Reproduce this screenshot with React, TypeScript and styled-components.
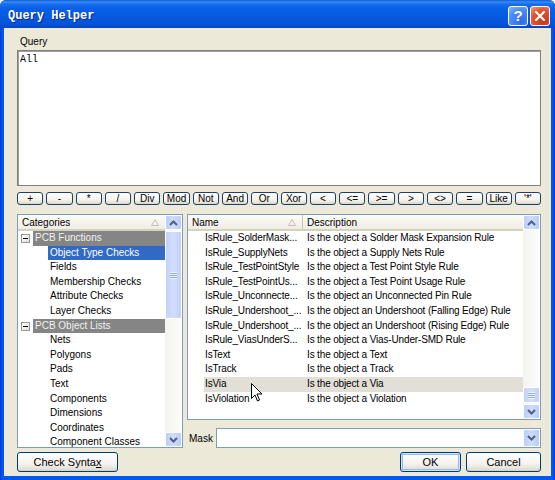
import React from 'react';
import styled, {createGlobalStyle, css} from 'styled-components';

const Global = createGlobalStyle`
  html, body {
    margin: 0;
    padding: 0;
    background: #ffffff;
  }
  body {
    font-family: "Liberation Sans", Arial, sans-serif;
    font-size: 10px;
    color: #000;
  }
`

const Window = styled.div`
  position: relative;
  width: 555px;
  height: 480px;
  box-sizing: border-box;
  display: flex;
  flex-direction: column;
  background: linear-gradient(to right, #0831d9, #0058ee 2px, #0058ee calc(100% - 2px), #0831d9);
  border-radius: 6px 6px 0 0;
  overflow: hidden;
`
const TitleBar = styled.div`
  height: 28px;
  flex: none;
  box-sizing: border-box;
  display: flex;
  align-items: center;
  padding: 3px 5px 0 8px;
  background: linear-gradient(to bottom, #0a5ad6 0%, #3b8cf6 7%, #1a6ff0 14%, #0860e8 30%, #0559e0 60%, #0653da 85%, #0446c4 100%);
`
const Title = styled.span`
  flex: 1;
  color: #fff;
  font-family: "Liberation Mono", "Courier New", monospace;
  font-weight: bold;
  font-size: 12px;
  text-shadow: 1px 1px 0 #0a2a8a;
`
const CapButton = styled.div<{$kind: 'help' | 'close'}>`
  width: 20px;
  height: 20px;
  margin-left: 2px;
  box-sizing: border-box;
  border: 1px solid #fff;
  border-radius: 3px;
  display: flex;
  align-items: center;
  justify-content: center;
  color: #fff;
  font-weight: bold;
  font-size: 15px;
  ${p => p.$kind === 'help'
    ? css`background: radial-gradient(circle at 70% 80%, #2c6cf0, #4a8cf8 60%, #8cb8ff);`
    : css`background: radial-gradient(circle at 70% 80%, #c8371c, #e4542f 60%, #f09a80);`}
`
const Body = styled.div`
  flex: 1;
  margin: 0 4px 4px;
  background: #ece9d8;
  display: flex;
  flex-direction: column;
  padding: 7px 10px 4px 13px;
`
const Label = styled.div`
  height: 14px;
  line-height: 14px;
  padding-left: 3px;
`
const QueryBox = styled.div`
  height: 136px;
  margin-top: 1px;
  box-sizing: border-box;
  background: #fff;
  border: 1px solid #7f7f7f;
  box-shadow: inset 1px 1px 0 #a0a0a0;
  padding: 3px 2px;
  font-family: "Liberation Mono", "Courier New", monospace;
  font-size: 10px;
  line-height: 12px;
`
const OpRow = styled.div`
  display: flex;
  gap: 3px;
  height: 13px;
  margin-top: 6px;
`
const xpButton = css`
  box-sizing: border-box;
  border: 1px solid #1c3f70;
  border-radius: 3px;
  background: linear-gradient(to bottom, #ffffff, #f4f3ee 60%, #e3e0d4 90%, #d6d0c0);
  color: #000;
  font-family: "Liberation Sans", Arial, sans-serif;
  display: flex;
  align-items: center;
  justify-content: center;
  padding: 0;
`
const OpButton = styled.div`
  ${xpButton};
  flex: 1;
  font-size: 10px;
  line-height: 11px;
`
const Panels = styled.div`
  display: grid;
  grid-template-columns: 166px 1fr;
  gap: 4px;
  margin-top: 9px;
  height: 234px;
`
const ListBox = styled.div<{$height?: number}>`
  box-sizing: border-box;
  border: 1px solid #7f9db9;
  background: #fff;
  display: grid;
  grid-template-columns: 1fr 17px;
  overflow: hidden;
  ${p => p.$height && css`height: ${p.$height}px;`}
`
const Column = styled.div`
  display: flex;
  flex-direction: column;
  overflow: hidden;
  min-width: 0;
`
const Header = styled.div`
  height: 16px;
  flex: none;
  box-sizing: border-box;
  display: flex;
  background: linear-gradient(to bottom, #fbfbf9, #efede2);
  border-bottom: 2px solid #d6d2c2;
`
const HeaderCell = styled.div<{$width?: number}>`
  display: flex;
  align-items: center;
  justify-content: space-between;
  padding: 0 6px 0 4px;
  box-sizing: border-box;
  ${p => p.$width ? css`width: ${p.$width}px; border-right: 1px solid #c7c5b2;` : css`flex: 1;`}
`
const SortArrow = () => (
  <svg width="8" height="7" viewBox="0 0 8 7">
    <path d="M4 0.5 L7.5 6.5 L0.5 6.5 Z" fill="none" stroke="#c5c2b2" strokeWidth="1" />
  </svg>
)
const TreeRow = styled.div`
  height: 14.6px;
  flex: none;
  display: flex;
  align-items: stretch;
  white-space: nowrap;
`
const Expander = styled.div`
  width: 9px;
  height: 9px;
  margin: 3px 3px 0 3px;
  box-sizing: border-box;
  border: 1px solid #919b9c;
  background: linear-gradient(135deg, #fff, #e0ddd2);
  display: flex;
  align-items: center;
  justify-content: center;
  &::after {
    content: '';
    width: 5px;
    height: 1px;
    background: #000;
  }
`
const TreeLabel = styled.div<{$variant: 'group' | 'selected' | 'plain'; $indent?: number}>`
  flex: 1;
  padding-left: 2px;
  line-height: 14.6px;
  margin-left: ${p => p.$indent ?? 0}px;
  ${p => p.$variant === 'group' && css`background: #858585; color: #f2f2f2;`}
  ${p => p.$variant === 'selected' && css`background: #316ac5; color: #fff;`}
`
const Scrollbar = styled.div`
  display: flex;
  flex-direction: column;
  background: linear-gradient(to right, #f3f3ef, #fdfdfb);
`
const ScrollButton = styled.div`
  height: 15px;
  flex: none;
  box-sizing: border-box;
  border: 1px solid #fff;
  border-radius: 2px;
  background: linear-gradient(to right, #bccdf9, #cfdcfc 50%, #b9cbf7);
  display: flex;
  align-items: center;
  justify-content: center;
`
const Track = styled.div`
  flex: 1;
  display: flex;
  flex-direction: column;
`
const Thumb = styled.div<{$height: number}>`
  height: ${p => p.$height}px;
  box-sizing: border-box;
  border: 1px solid #fff;
  border-radius: 2px;
  background: linear-gradient(to right, #c2d2fa, #d2defc 50%, #c0d0f8);
  display: flex;
  align-items: center;
  justify-content: center;
  &::after {
    content: '';
    width: 7px;
    height: 7px;
    background: repeating-linear-gradient(to bottom, #eef3ff 0 1px, #8faae8 1px 2px);
  }
`
const Spacer = styled.div<{$height?: number}>`
  flex: ${p => (p.$height == null ? 1 : 'none')};
  ${p => p.$height != null && css`height: ${p.$height}px;`}
`
const Chevron = ({up}: {up?: boolean}) => (
  <svg width="9" height="6" viewBox="0 0 9 6">
    <path d={up ? 'M1 5 L4.5 1.5 L8 5' : 'M1 1 L4.5 4.5 L8 1'} fill="none" stroke="#4d6185" strokeWidth="2" />
  </svg>
)
const Right = styled.div`
  display: flex;
  flex-direction: column;
  min-width: 0;
`
const EntryRow = styled.div<{$selected?: boolean}>`
  height: 14.6px;
  flex: none;
  margin-left: 16px;
  display: grid;
  grid-template-columns: 99px 1fr;
  line-height: 14.6px;
  letter-spacing: -0.15px;
  white-space: nowrap;
  ${p => p.$selected && css`background: #e2e0d6;`}
`
const Cell = styled.div<{$pad: number}>`
  padding-left: ${p => p.$pad}px;
  overflow: hidden;
`
const MaskRow = styled.div`
  display: flex;
  align-items: center;
  margin-top: 8px;
  height: 20px;
`
const MaskLabel = styled.div`
  width: 29px;
  padding-left: 2px;
  box-sizing: border-box;
`
const Combo = styled.div`
  flex: 1;
  height: 20px;
  box-sizing: border-box;
  border: 1px solid #7f9db9;
  background: #fff;
  display: flex;
  justify-content: flex-end;
`
const ComboButton = styled(ScrollButton)`
  width: 17px;
  height: 100%;
`
const Footer = styled.div`
  display: flex;
  margin-top: 4px;
  height: 20px;
  gap: 5px;
`
const DialogButton = styled.div<{$width: number; $default?: boolean}>`
  ${xpButton};
  width: ${p => p.$width}px;
  font-size: 11px;
  border-color: #003c74;
  ${p => p.$default && css`box-shadow: inset 0 0 0 1px #cee7ff, inset 0 0 0 2px #98b8ea;`}
`
const Cursor = styled.svg`
  position: absolute;
  left: 251px;
  top: 383px;
`

const operators = ['+', '-', '*', '/', 'Div', 'Mod', 'Not', 'And', 'Or', 'Xor', '<', '<=', '>=', '>', '<>', '=', 'Like', "'*'"]

const categories = [
  {group: 'PCB Functions', items: ['Object Type Checks', 'Fields', 'Membership Checks', 'Attribute Checks', 'Layer Checks']},
  {group: 'PCB Object Lists', items: ['Nets', 'Polygons', 'Pads', 'Text', 'Components', 'Dimensions', 'Coordinates', 'Component Classes']},
]

const entries = [
  ['IsRule_SolderMask...', 'Is the object a Solder Mask Expansion Rule'],
  ['IsRule_SupplyNets', 'Is the object a Supply Nets Rule'],
  ['IsRule_TestPointStyle', 'Is the object a Test Point Style Rule'],
  ['IsRule_TestPointUs...', 'Is the object a Test Point Usage Rule'],
  ['IsRule_Unconnecte...', 'Is the object an Unconnected Pin Rule'],
  ['IsRule_Undershoot_...', 'Is the object an Undershoot (Falling Edge) Rule'],
  ['IsRule_Undershoot_...', 'Is the object an Undershoot (Rising Edge) Rule'],
  ['IsRule_ViasUnderS...', 'Is the object a Vias-Under-SMD Rule'],
  ['IsText', 'Is the object a Text'],
  ['IsTrack', 'Is the object a Track'],
  ['IsVia', 'Is the object a Via'],
  ['IsViolation', 'Is the object a Violation'],
]

function VScroll({before, thumb}: {before: number; thumb: number}) {
  return (
    <Scrollbar>
      <ScrollButton><Chevron up/></ScrollButton>
      <Track>
        <Spacer $height={before}/>
        <Thumb $height={thumb}/>
        <Spacer/>
      </Track>
      <ScrollButton><Chevron/></ScrollButton>
    </Scrollbar>
  )
}

export default function App() {
  return (
    <Window>
      <Global/>
      <TitleBar>
        <Title>Query Helper</Title>
        <CapButton $kind="help">?</CapButton>
        <CapButton $kind="close">
          <svg width="10" height="10" viewBox="0 0 10 10">
            <path d="M1 1 L9 9 M9 1 L1 9" stroke="#fff" strokeWidth="2.2" strokeLinecap="square"/>
          </svg>
        </CapButton>
      </TitleBar>
      <Body>
        <Label>Query</Label>
        <QueryBox>All</QueryBox>
        <OpRow>
          {operators.map(op => <OpButton key={op}>{op}</OpButton>)}
        </OpRow>
        <Panels>
          <ListBox>
            <Column>
              <Header>
                <HeaderCell>Categories<SortArrow/></HeaderCell>
              </Header>
              {categories.map((cat, ci) => (
                <React.Fragment key={cat.group}>
                  <TreeRow>
                    <Expander/>
                    <TreeLabel $variant="group">{cat.group}</TreeLabel>
                  </TreeRow>
                  {cat.items.map((item, i) => (
                    <TreeRow key={item}>
                      <TreeLabel $indent={30} $variant={ci === 0 && i === 0 ? 'selected' : 'plain'}>{item}</TreeLabel>
                    </TreeRow>
                  ))}
                </React.Fragment>
              ))}
            </Column>
            <VScroll before={1} thumb={88}/>
          </ListBox>
          <Right>
            <ListBox $height={206}>
              <Column>
                <Header>
                  <HeaderCell $width={115}>Name<SortArrow/></HeaderCell>
                  <HeaderCell>Description</HeaderCell>
                </Header>
                {entries.map(([name, desc], i) => (
                  <EntryRow key={i} $selected={name === 'IsVia'}>
                    <Cell $pad={1}>{name}</Cell>
                    <Cell $pad={4}>{desc}</Cell>
                  </EntryRow>
                ))}
              </Column>
              <VScroll before={157} thumb={16}/>
            </ListBox>
            <MaskRow>
              <MaskLabel>Mask</MaskLabel>
              <Combo>
                <ComboButton><Chevron/></ComboButton>
              </Combo>
            </MaskRow>
          </Right>
        </Panels>
        <Footer>
          <DialogButton $width={101}>Check Synta<u>x</u></DialogButton>
          <Spacer/>
          <DialogButton $width={61} $default>OK</DialogButton>
          <DialogButton $width={75}>Cancel</DialogButton>
        </Footer>
      </Body>
      <Cursor width="12" height="19" viewBox="0 0 12 19">
        <path d="M0.5 0.5 L0.5 15.5 L4 12 L6.5 18 L8.5 17 L6 11 L11 11 Z" fill="#fff" stroke="#000" strokeWidth="1"/>
      </Cursor>
    </Window>
  )
}
